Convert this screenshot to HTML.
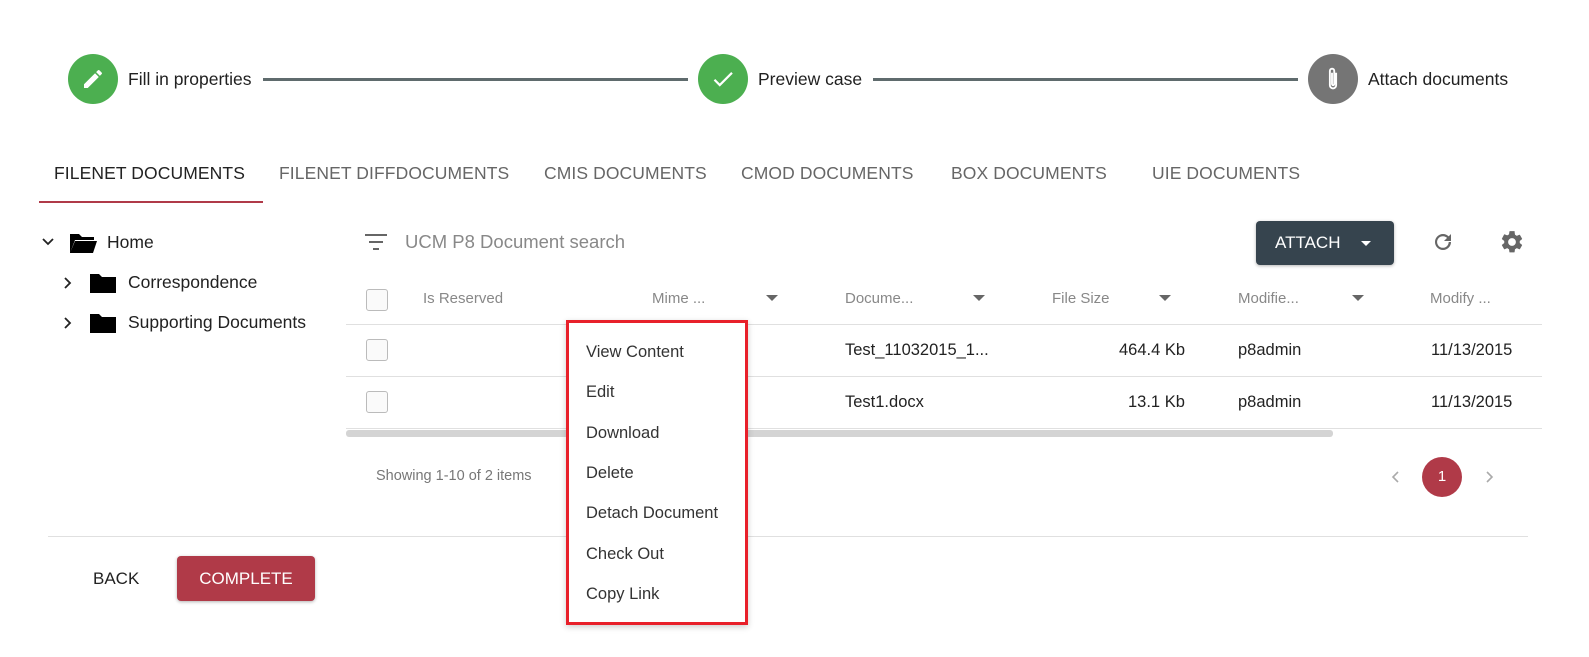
<!DOCTYPE html>
<html><head><style>
*{box-sizing:border-box;margin:0;padding:0}
body{width:1589px;height:657px;background:#fff;font-family:"Liberation Sans",sans-serif;position:relative;overflow:hidden;color:#212121}
.a{position:absolute;white-space:nowrap}
.circ{position:absolute;width:50px;height:50px;border-radius:50%;display:flex;align-items:center;justify-content:center}
.line{position:absolute;height:3px;background:#5f6b6d;top:78px}
.tab{position:absolute;top:163px;font-size:17.5px;color:#666;letter-spacing:.1px}
.hd{position:absolute;top:290px;font-size:15px;color:#888}
.arr{position:absolute;top:295px;width:0;height:0;border-left:6px solid transparent;border-right:6px solid transparent;border-top:6px solid #666}
.cb{position:absolute;left:366px;width:22px;height:22px;border:1px solid #bbb;border-radius:3px;background:#fafafa}
.hl{position:absolute;left:346px;width:1196px;height:1px;background:#e0e0e0}
.cell{position:absolute;font-size:16.5px;color:#222}
.mi{position:absolute;left:17px;font-size:16.5px;color:#333}
</style></head><body>
<div class="circ" style="left:68px;top:54px;background:#4caf50"><svg width="24" height="24" viewBox="0 0 24 24"><path fill="#fff" d="M3 17.25V21h3.75L17.81 9.94l-3.75-3.75L3 17.25zM20.71 7.04a1 1 0 000-1.41l-2.34-2.34a1 1 0 00-1.41 0l-1.83 1.83 3.75 3.75 1.83-1.83z"/></svg></div>
<div class="a" style="left:128px;top:69px;font-size:17.5px">Fill in properties</div>
<div class="line" style="left:263px;width:425px"></div>
<div class="circ" style="left:698px;top:54px;background:#4caf50"><svg width="26" height="26" viewBox="0 0 24 24"><path fill="#fff" d="M9 16.17L4.83 12l-1.42 1.41L9 19 21 7l-1.41-1.41z"/></svg></div>
<div class="a" style="left:758px;top:69px;font-size:17.5px">Preview case</div>
<div class="line" style="left:873px;width:425px"></div>
<div class="circ" style="left:1308px;top:54px;background:#757575"><svg width="30" height="30" viewBox="0 0 24 24"><path fill="none" stroke="#fff" stroke-width="1.5" d="M14.5 7v10a2.5 2.5 0 01-5 0V5.5a1.75 1.75 0 013.5 0V16a.9.9 0 01-1.8 0V7"/></svg></div>
<div class="a" style="left:1368px;top:69px;font-size:17.5px">Attach documents</div>

<div class="tab" style="left:54px;color:#222">FILENET DOCUMENTS</div>
<div class="tab" style="left:279px">FILENET DIFFDOCUMENTS</div>
<div class="tab" style="left:544px">CMIS DOCUMENTS</div>
<div class="tab" style="left:741px">CMOD DOCUMENTS</div>
<div class="tab" style="left:951px">BOX DOCUMENTS</div>
<div class="tab" style="left:1152px">UIE DOCUMENTS</div>
<div class="a" style="left:39px;top:201px;width:224px;height:2px;background:#b03a48"></div>

<svg class="a" style="left:41px;top:236px" width="14" height="12" viewBox="0 0 14 12"><path d="M2 3l5 5 5-5" fill="none" stroke="#222" stroke-width="1.8"/></svg>
<svg class="a" style="left:68px;top:231px" width="30" height="24" viewBox="0 0 30 24"><path d="M2 3h9l3 3h12v3H7L2 22z M7 10h22l-4 12H2z" fill="#000"/></svg>
<div class="a" style="left:107px;top:232px;font-size:17.5px">Home</div>
<svg class="a" style="left:62px;top:276px" width="12" height="14" viewBox="0 0 12 14"><path d="M3 2l5 5-5 5" fill="none" stroke="#222" stroke-width="1.8"/></svg>
<svg class="a" style="left:89px;top:271px" width="28" height="24" viewBox="0 0 28 24"><path d="M1 3h9l3 3h14v16H1z" fill="#000"/></svg>
<div class="a" style="left:128px;top:272px;font-size:17.5px">Correspondence</div>
<svg class="a" style="left:62px;top:316px" width="12" height="14" viewBox="0 0 12 14"><path d="M3 2l5 5-5 5" fill="none" stroke="#222" stroke-width="1.8"/></svg>
<svg class="a" style="left:89px;top:311px" width="28" height="24" viewBox="0 0 28 24"><path d="M1 3h9l3 3h14v16H1z" fill="#000"/></svg>
<div class="a" style="left:128px;top:312px;font-size:17.5px">Supporting Documents</div>

<svg class="a" style="left:364px;top:232px" width="24" height="20" viewBox="0 0 24 20"><path d="M1 3h22M5 10h14M9 17h6" stroke="#666" stroke-width="2"/></svg>
<div class="a" style="left:405px;top:231px;font-size:18.5px;color:#888">UCM P8 Document search</div>
<div class="a" style="left:1256px;top:221px;width:138px;height:44px;background:#36444e;border-radius:4px;box-shadow:0 1px 3px rgba(0,0,0,.3)"></div>
<div class="a" style="left:1275px;top:233px;font-size:17px;color:#fff;font-weight:500">ATTACH</div>
<div class="a" style="left:1361px;top:241px;border-left:5px solid transparent;border-right:5px solid transparent;border-top:5px solid #fff"></div>
<svg class="a" style="left:1431px;top:230px" width="24" height="24" viewBox="0 0 24 24"><path fill="#666" d="M17.65 6.35A7.96 7.96 0 0012 4a8 8 0 108 8h-2.3A5.8 5.8 0 1112 6.2c1.6 0 3 .7 4.1 1.7L13 11h7V4z"/></svg>
<svg class="a" style="left:1499px;top:229px" width="26" height="26" viewBox="0 0 24 24"><path fill="#666" d="M19.14 12.94a7 7 0 000-1.88l2.03-1.58a.5.5 0 00.12-.61l-1.920-3.32a.5.5 0 00-.59-.22l-2.39.96a7 7 0 00-1.62-.94l-.36-2.54A.5.5 0 0013.92 2h-3.84a.5.5 0 00-.48.41l-.36 2.540a7 7 0 00-1.62.94l-2.39-.96a.5.5 0 00-.59.22L2.72 8.87a.5.5 0 00.12.61l2.03 1.58a7 7 0 000 1.88l-2.03 1.58a.5.5 0 00-.12.61l1.92 3.32c.12.22.37.29.59.22l2.39-.96c.5.38 1.04.7 1.62.94l.36 2.54c.05.24.24.41.48.41h3.84c.24 0 .44-.17.47-.41l.36-2.54a7 7 0 001.62-.94l2.39.96c.22.08.47 0 .59-.22l1.92-3.32a.5.5 0 00-.12-.61zM12 15.6a3.6 3.6 0 110-7.2 3.6 3.6 0 010 7.2z"/></svg>

<div class="cb" style="top:289px"></div>
<div class="hd" style="left:423px">Is Reserved</div>
<div class="hd" style="left:652px">Mime ...</div><div class="arr" style="left:766px"></div>
<div class="hd" style="left:845px">Docume...</div><div class="arr" style="left:973px"></div>
<div class="hd" style="left:1052px">File Size</div><div class="arr" style="left:1159px"></div>
<div class="hd" style="left:1238px">Modifie...</div><div class="arr" style="left:1352px"></div>
<div class="hd" style="left:1430px">Modify ...</div>
<div class="hl" style="top:324px"></div>
<div class="cb" style="top:339px"></div>
<div class="cell" style="left:845px;top:341px">Test_11032015_1...</div>
<div class="cell" style="left:1119px;top:341px">464.4 Kb</div>
<div class="cell" style="left:1238px;top:341px">p8admin</div>
<div class="cell" style="left:1431px;top:341px">11/13/2015</div>
<div class="hl" style="top:376px"></div>
<div class="cb" style="top:391px"></div>
<div class="cell" style="left:845px;top:393px">Test1.docx</div>
<div class="cell" style="left:1128px;top:393px">13.1 Kb</div>
<div class="cell" style="left:1238px;top:393px">p8admin</div>
<div class="cell" style="left:1431px;top:393px">11/13/2015</div>
<div class="hl" style="top:428px"></div>
<div class="a" style="left:346px;top:430px;width:987px;height:7px;background:#d4d4d4;border-radius:3px"></div>

<div class="a" style="left:376px;top:468px;font-size:14.5px;color:#777">Showing 1-10 of 2 items</div>
<svg class="a" style="left:1390px;top:469px" width="12" height="16" viewBox="0 0 12 16"><path d="M8 3L3 8l5 5" fill="none" stroke="#aaa" stroke-width="1.6"/></svg>
<div class="a" style="left:1422px;top:457px;width:40px;height:40px;border-radius:50%;background:#b03a48;color:#fff;font-size:15px;text-align:center;line-height:40px">1</div>
<svg class="a" style="left:1483px;top:469px" width="12" height="16" viewBox="0 0 12 16"><path d="M4 3l5 5-5 5" fill="none" stroke="#aaa" stroke-width="1.6"/></svg>

<div class="a" style="left:48px;top:536px;width:1480px;height:1px;background:#e0e0e0"></div>
<div class="a" style="left:93px;top:569px;font-size:17px;color:#222">BACK</div>
<div class="a" style="left:177px;top:556px;width:138px;height:45px;background:#b03a48;border-radius:4px;box-shadow:0 1px 3px rgba(0,0,0,.3);color:#fff;font-size:17px;text-align:center;line-height:45px">COMPLETE</div>

<div class="a" style="left:566px;top:320px;width:182px;height:305px;background:#fff;border:3px solid #e8202a;box-shadow:0 2px 6px rgba(0,0,0,.2)">
<div class="mi" style="top:20px">View Content</div>
<div class="mi" style="top:60px">Edit</div>
<div class="mi" style="top:101px">Download</div>
<div class="mi" style="top:141px">Delete</div>
<div class="mi" style="top:181px">Detach Document</div>
<div class="mi" style="top:222px">Check Out</div>
<div class="mi" style="top:262px">Copy Link</div>
</div>
</body></html>
